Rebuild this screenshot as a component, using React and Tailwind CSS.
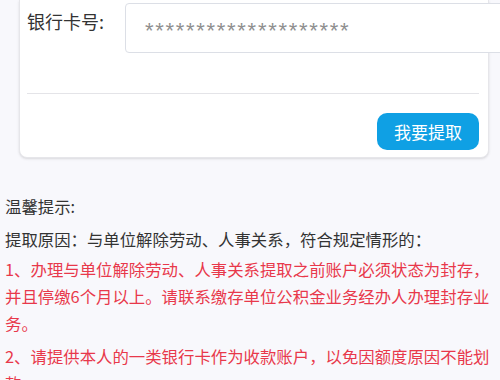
export default function App() {
    const font = { fontFamily: '"Noto Sans CJK SC", "Noto Sans", sans-serif' };
    return (
        <div className="w-[500px] h-[380px] overflow-hidden bg-[#f8f8fc]" style={font}>
            {/* card, top is scrolled out of view */}
            <div className="ml-[19px] w-[470px] bg-white border border-t-0 border-[#e6e6ea] rounded-b-lg shadow-sm pl-[7px] pr-[9px] pb-[7px]">
                <div className="flex flex-row items-start pt-[3px]">
                    <span className="shrink-0 w-[98px] mt-[4px] leading-[28px] text-[18px] text-[#333] whitespace-nowrap">银行卡号:</span>
                    <div className="shrink-0 w-[390px] h-[50px] border border-[#dcdfe6] rounded-[4px] bg-white flex items-center pl-[19px]">
                        <span className="text-[22px] leading-none pt-[6px] tracking-[1.7px] text-[#8f8f8f]" style={{ fontFamily: '"Liberation Sans", sans-serif' }}>
                            ********************
                        </span>
                    </div>
                </div>
                <div className="mt-[40px] h-px bg-[#e4e4e8]" />
                <div className="flex justify-end mt-[19px]">
                    <button className="w-[102px] h-[37px] rounded-[10px] bg-[#0fa0e4] text-white text-[17px]">我要提取</button>
                </div>
            </div>

            <div className="w-[490px] px-[5px] mt-[35px] text-[16.4px] leading-[27px] box-content">
                <p className="text-[#333]">温馨提示:</p>
                <p className="text-[#333] mt-[6px]">提取原因：与单位解除劳动、人事关系，符合规定情形的：</p>
                <p className="text-[#e8384b] mt-[3px]">1、办理与单位解除劳动、人事关系提取之前账户必须状态为封存，并且停缴6个月以上。请联系缴存单位公积金业务经办人办理封存业务。</p>
                <p className="text-[#e8384b] mt-[6px]">2、请提供本人的一类银行卡作为收款账户，以免因额度原因不能划款。</p>
            </div>
        </div>
    );
}
